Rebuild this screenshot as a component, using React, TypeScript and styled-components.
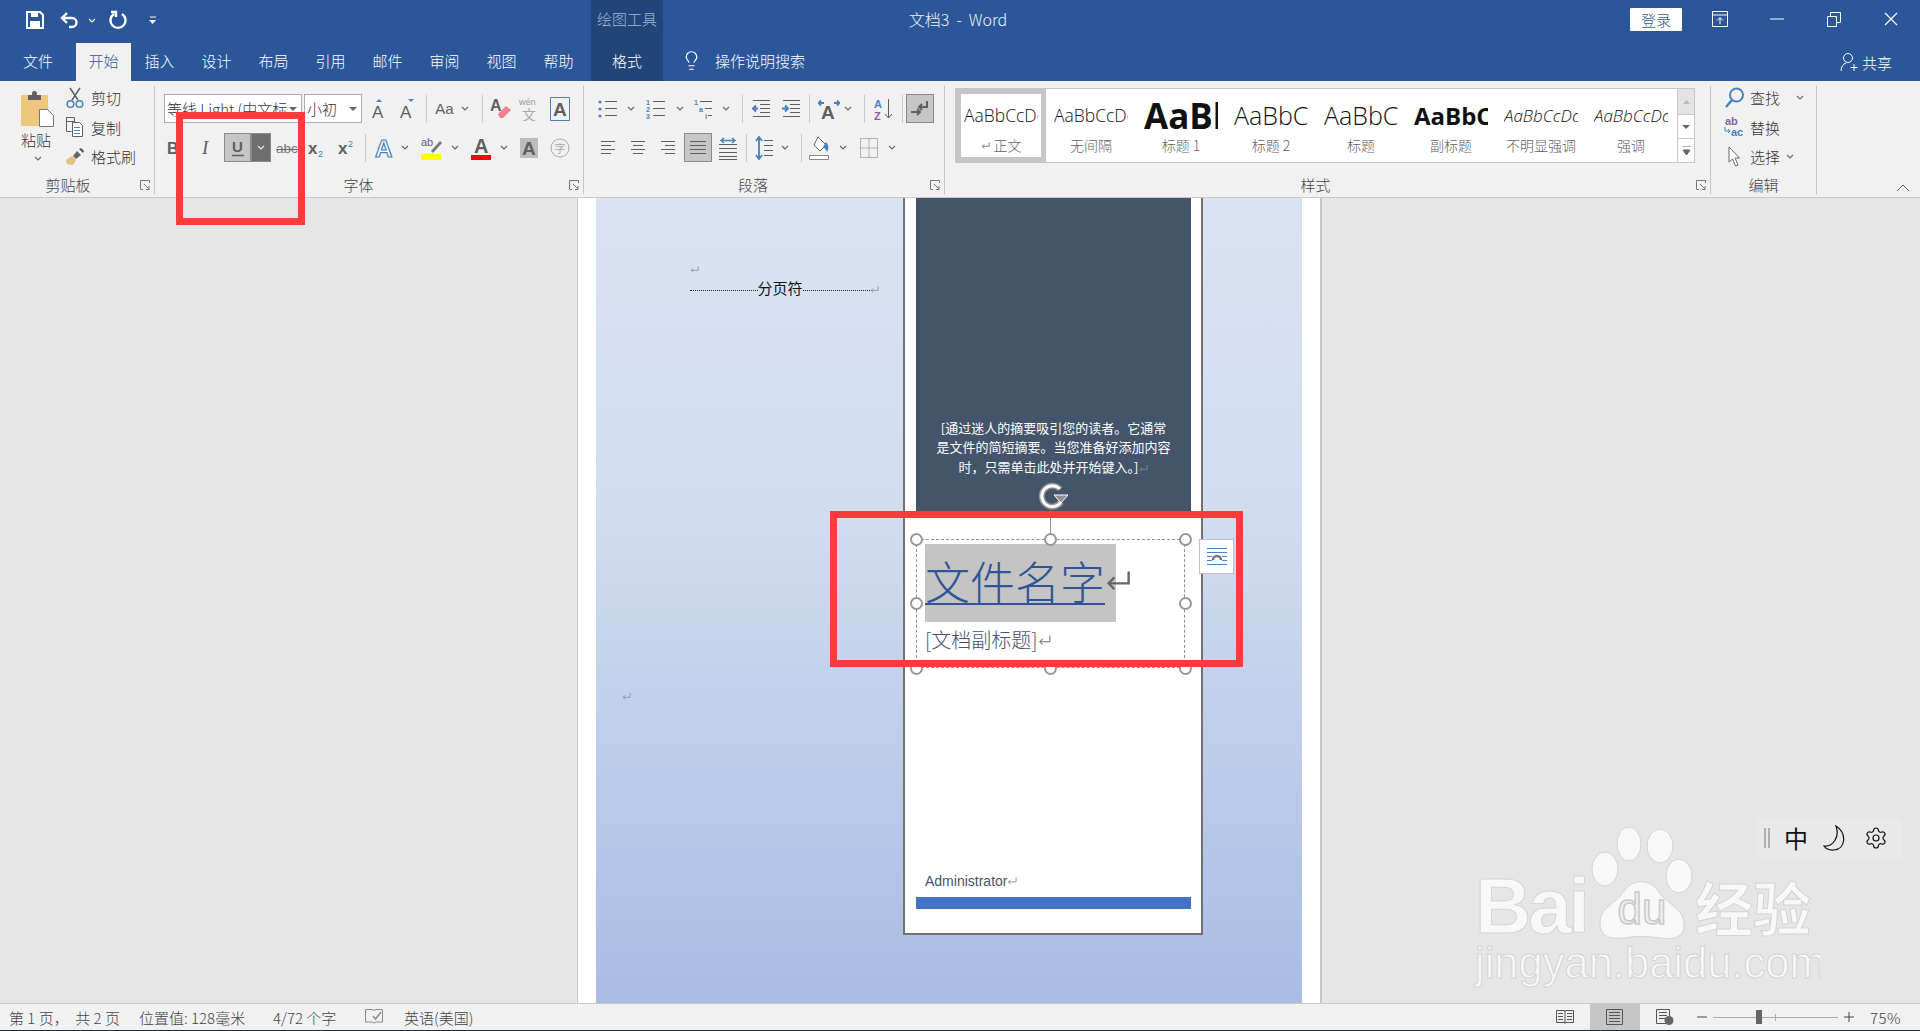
import React, { FC, ReactNode } from 'react'
import styled, { createGlobalStyle } from 'styled-components'
import { Lightbulb, Settings } from 'lucide-react'

const GREY = '#5f5f5f'
const BLUE = '#4a80bd'

const Global = createGlobalStyle`
  html, body { margin: 0; padding: 0; background: #e6e6e6; }
  body { font-family: "Noto Sans CJK SC", "Liberation Sans", sans-serif; font-weight: 300; overflow: hidden; }
  * { box-sizing: border-box; }
`

const Window = styled.div`
  position: relative;
  width: 1920px;
  height: 1031px;
  display: flex;
  flex-direction: column;
  overflow: hidden;
`

/* title bar */
const TopRow = styled.div`
  display: flex;
  height: 43px;
  background: #2b579a;
  color: #fff;
`
const Qat = styled.div`
  display: flex;
  width: 591px;
  padding-left: 21px;
`
const QatItem = styled.div<{ $w: number; $ml?: number }>`
  width: ${(p) => p.$w}px;
  margin-left: ${(p) => p.$ml ?? 0}px;
  height: 40px;
  display: flex;
  align-items: center;
  justify-content: center;
`
const ToolsHeader = styled.div`
  width: 72px;
  background: #224579;
  color: #a3b6d3;
  font-size: 15px;
  line-height: 38px;
  text-align: center;
  white-space: nowrap;
`
const DocTitle = styled.div`
  width: 590px;
  text-align: center;
  font-size: 16px;
  line-height: 38px;
  color: #f2f2f2;
  white-space: pre;
`
const SignIn = styled.div`
  margin: 8px 9px 0 auto;
  width: 52px;
  height: 23px;
  background: #fff;
  border-radius: 1px;
  color: #2b579a;
  font-size: 15px;
  line-height: 23px;
  text-align: center;
`
const WinButton = styled.div<{ $w: number }>`
  width: ${(p) => p.$w}px;
  height: 38px;
  display: flex;
  align-items: center;
  justify-content: center;
`

/* tabs */
const TabRow = styled.div`
  display: flex;
  height: 38px;
  background: #2b579a;
  color: #fff;
  font-size: 15px;
`
const Tab = styled.div<{ $w: number; $active?: boolean; $context?: boolean }>`
  width: ${(p) => p.$w}px;
  padding: 0 0 3px 0;
  display: flex;
  align-items: center;
  justify-content: center;
  background: ${(p) => (p.$active ? '#f1f1f1' : p.$context ? '#224579' : 'transparent')};
  color: ${(p) => (p.$active ? '#2b579a' : '#fff')};
  margin-left: ${(p) => (p.$context ? 4 : 0)}px;
`
const Search = styled.div`
  margin-left: 18px;
  padding-bottom: 3px;
  display: flex;
  align-items: center;
  gap: 13px;
  font-size: 15px;
`
const Share = styled.div`
  margin-left: auto;
  padding: 0 28px 0 0;
  display: flex;
  align-items: center;
  gap: 4px;
  font-size: 15px;
`

/* ribbon */
const Ribbon = styled.div`
  display: flex;
  height: 117px;
  background: #f1f1f1;
  border-bottom: 1px solid #c8c8c8;
  color: #444;
  font-size: 15px;
`
const Group = styled.div<{ $w: number; $pl?: number }>`
  width: ${(p) => p.$w}px;
  margin: 5px 0 3px;
  padding-left: ${(p) => p.$pl ?? 0}px;
  border-right: 1px solid #c6c6c6;
  display: flex;
  flex-direction: column;
`
const GroupFooter = styled.div`
  margin-top: auto;
  height: 18px;
  display: grid;
  grid-template-columns: 1fr auto 1fr;
  align-items: center;
  font-size: 15px;
  line-height: 18px;
  color: #444;
`
const FooterLabel = styled.div<{ $shift?: number }>`
  grid-column: 2;
  margin-right: ${(p) => (p.$shift ?? 0) * 2}px;
`
const Launcher = styled.div`
  grid-column: 3;
  justify-self: end;
  display: flex;
  margin-right: 4px;
`
const FontRows = styled.div`
  padding-top: 8px;
  display: flex;
  flex-direction: column;
  gap: 10px;
`
const ToolRow = styled.div`
  display: flex;
  align-items: center;
  height: 29px;
`
const Tool = styled.div<{ $w: number; $ml?: number; $on?: boolean; $dark?: boolean }>`
  width: ${(p) => p.$w}px;
  height: 29px;
  margin-left: ${(p) => p.$ml ?? 0}px;
  display: flex;
  align-items: center;
  justify-content: center;
  font-family: "Liberation Sans", sans-serif;
  font-weight: 400;
  color: ${GREY};
  background: ${(p) => (p.$dark ? '#6e6e6e' : p.$on ? '#c6c6c6' : 'transparent')};
  border: 1px solid ${(p) => (p.$on || p.$dark ? '#8a8a8a' : 'transparent')};
  flex: none;
`
const Sep = styled.div<{ $l: number; $r: number }>`
  width: 1px;
  height: 28px;
  margin: 0 ${(p) => p.$r}px 0 ${(p) => p.$l}px;
  background: #c9c9c9;
  flex: none;
`
const Combo = styled.div<{ $w: number; $ml?: number }>`
  width: ${(p) => p.$w}px;
  height: 29px;
  margin-left: ${(p) => p.$ml ?? 0}px;
  background: #fff;
  border: 1px solid #ababab;
  display: flex;
  align-items: center;
  padding: 0 4px 0 2px;
  gap: 2px;
  color: #333;
  flex: none;
`
const ComboText = styled.span`
  flex: 1;
  min-width: 0;
  font-size: 15px;
  white-space: nowrap;
  overflow: hidden;
`
const ClipBody = styled.div`
  display: flex;
  padding-left: 13px;
`
const PasteCol = styled.div`
  width: 50px;
  padding-top: 4px;
  display: flex;
  flex-direction: column;
  align-items: center;
  color: #333;
`
const PasteLabel = styled.span`
  margin: 2px 4px 6px 0;
  line-height: 20px;
`
const SmallList = styled.div`
  display: flex;
  flex-direction: column;
  margin: -3px 0 0 2px;
`
const SmallItem = styled.div`
  height: 29.5px;
  display: flex;
  align-items: center;
  gap: 6px;
  color: #333;
  white-space: nowrap;
`
const IconCell = styled.span<{ $w?: number }>`
  width: ${(p) => p.$w ?? 20}px;
  display: flex;
  justify-content: center;
`
const GalleryWrap = styled.div`
  padding: 2px 0 0 10px;
`
const Gallery = styled.div`
  width: 740px;
  height: 75px;
  background: #fff;
  border: 1px solid #c6c6c6;
  display: flex;
`
const StyleItem = styled.div<{ $on?: boolean }>`
  width: 90px;
  height: 73px;
  flex: none;
  overflow: hidden;
  display: flex;
  flex-direction: column;
  align-items: center;
  padding-top: ${(p) => (p.$on ? 1 : 6)}px;
  border-style: solid;
  border-color: ${(p) => (p.$on ? '#c6c6c6' : 'transparent')};
  border-width: ${(p) => (p.$on ? '5px' : '0 5px')};
`
const Preview = styled.div<{ $size: number; $bold?: boolean; $italic?: boolean }>`
  width: 74px;
  height: 40px;
  flex: none;
  overflow: hidden;
  white-space: nowrap;
  display: flex;
  align-items: center;
  font-family: "Open Sans", "Liberation Sans", sans-serif;
  font-size: ${(p) => p.$size}px;
  font-weight: ${(p) => (p.$bold ? 700 : 300)};
  font-style: ${(p) => (p.$italic ? 'italic' : 'normal')};
  color: #111;
`
const StyleName = styled.div`
  font-size: 14px;
  line-height: 20px;
  color: #5f5f5f;
  white-space: nowrap;
  display: flex;
  align-items: center;
  gap: 4px;
`
const Scroller = styled.div`
  margin-left: auto;
  width: 17px;
  display: flex;
  flex-direction: column;
`
const ScrollBtn = styled.div<{ $h: number; $off?: boolean }>`
  height: ${(p) => p.$h}px;
  background: ${(p) => (p.$off ? '#e3e3e3' : '#fff')};
  border-left: 1px solid #c6c6c6;
  border-bottom: 1px solid #c6c6c6;
  display: flex;
  align-items: center;
  justify-content: center;
  &:last-child { border-bottom: 0; }
`
const EditList = styled.div`
  margin-top: -3px;
  padding-left: 13px;
  display: flex;
  flex-direction: column;
`
const EditChevron = styled.span<{ $ml: number }>`
  display: flex;
  margin-left: ${(p) => p.$ml}px;
`
const RibbonEnd = styled.div`
  flex: 1;
  display: flex;
  align-items: flex-end;
  justify-content: flex-end;
  padding: 0 10px 5px 0;
`

/* document */
const DocArea = styled.div`
  position: relative;
  height: 805px;
  background: #e6e6e6;
  padding-left: 577px;
`
const Page = styled.div`
  width: 745px;
  height: 100%;
  background: #fff;
  padding: 0 18px;
  border-left: 1px solid #c6c6c6;
  border-right: 2px solid #c6c6c6;
`
const Sheet = styled.div`
  position: relative;
  height: 100%;
  overflow: hidden;
  background: linear-gradient(180deg, #dae3f3 0%, #d0dcf0 40%, #a8bce3 100%);
`
const Mark = styled.span<{ $x: number; $y: number }>`
  position: absolute;
  left: ${(p) => p.$x}px;
  top: ${(p) => p.$y}px;
  display: flex;
`
const PageBreak = styled.div`
  position: absolute;
  left: 94px;
  top: 79px;
  width: 180px;
  height: 20px;
  display: flex;
  align-items: center;
  font-size: 15px;
  font-weight: 400;
  color: #111;
`
const DotRule = styled.span`
  flex: 1;
  margin-top: 6px;
  border-top: 1px dotted #222;
`
const Card = styled.div`
  position: absolute;
  left: 307px;
  top: -2px;
  width: 300px;
  height: 739px;
  background: #fff;
  border: 2px solid #767171;
  padding: 0 10px 24px 11px;
  display: flex;
  flex-direction: column;
`
const Abstract = styled.div`
  height: 318px;
  flex: none;
  background: #44546a;
  color: #fff;
  font-size: 13px;
  font-weight: 400;
  line-height: 19.5px;
  text-align: center;
  display: flex;
  flex-direction: column;
  justify-content: flex-end;
  padding-bottom: 39px;
`
const AbstractEnd = styled.span`
  display: inline-block;
  margin-left: 1px;
  vertical-align: -1px;
`
const Author = styled.div`
  margin-top: auto;
  padding: 0 0 6px 9px;
  font-family: "Liberation Sans", sans-serif;
  font-weight: 400;
  font-size: 14px;
  line-height: 20px;
  color: #44546a;
  display: flex;
  align-items: center;
`
const BlueBar = styled.div`
  height: 12px;
  background: #4472c4;
  flex: none;
`
const TextBox = styled.div`
  position: absolute;
  left: 320px;
  top: 341px;
  width: 269px;
  height: 129px;
  border: 1px dashed #8f8f8f;
  padding: 4px 0 0 8px;
`
const Selection = styled.div`
  width: 191px;
  height: 78px;
  padding-top: 14px;
  background: #c4c4c4;
  display: flex;
  align-items: flex-start;
  color: #2f5597;
  font-size: 45px;
  line-height: 45px;
`
const Underlined = styled.span`
  display: block;
  flex: none;
  width: 180px;
  white-space: nowrap;
  border-bottom: 2px solid #2f5597;
`
const TitleReturn = styled.span`
  display: flex;
  flex: none;
  margin-top: 10px;
`
const Subtitle = styled.div`
  margin-top: 4px;
  display: flex;
  align-items: center;
  font-size: 20px;
  line-height: 28px;
  color: #44546a;
`
const Handle = styled.span<{ $x: number; $y: number }>`
  position: absolute;
  left: ${(p) => p.$x}px;
  top: ${(p) => p.$y}px;
  width: 13px;
  height: 13px;
  margin: -7px 0 0 -7px;
  border: 2px solid #979797;
  border-radius: 50%;
  background: #fff;
`
const Stem = styled.span`
  position: absolute;
  left: 454px;
  top: 312px;
  width: 1px;
  height: 29px;
  background: #8f8f8f;
`
const LayoutBtn = styled.div`
  position: absolute;
  left: 603px;
  top: 341px;
  width: 35px;
  height: 35px;
  background: #fff;
  border: 1px solid #c0c0c0;
  display: flex;
  align-items: center;
  justify-content: center;
`
const Ime = styled.div`
  position: absolute;
  left: 1757px;
  top: 620px;
  width: 145px;
  height: 40px;
  background: #e9e9e9;
  display: flex;
  align-items: center;
  color: #111;
`
const ImeGrip = styled.span`
  margin-left: 7px;
  width: 6px;
  height: 20px;
  border-left: 2px solid #b0b0b0;
  border-right: 2px solid #b0b0b0;
`
const ImeChar = styled.span`
  margin-left: 14px;
  font-size: 24px;
  font-weight: 400;
  line-height: 30px;
`
const ImeIcon = styled.span<{ $ml: number }>`
  display: flex;
  margin-left: ${(p) => p.$ml}px;
`
const Watermark = styled.svg`
  position: absolute;
  left: 1473px;
  top: 627px;
  pointer-events: none;
`
const WmText = styled.text<{ $size: number; $bold?: boolean }>`
  font-family: "Liberation Sans", "Noto Sans CJK SC", sans-serif;
  font-size: ${(p) => p.$size}px;
  font-weight: ${(p) => (p.$bold ? 700 : 400)};
  fill: #f8f8f8;
  stroke: #d4d4d4;
  stroke-width: 1;
`
const WmInner = styled.text`
  font-family: "Liberation Sans", sans-serif;
  font-size: 44px;
  fill: #f0f0f0;
  stroke: #c9c9c9;
  stroke-width: 1.5;
`

/* status bar */
const Status = styled.div`
  height: 28px;
  background: #f1f1f1;
  border-top: 1px solid #c8c8c8;
  border-bottom: 1px solid #1c2b3a;
  display: flex;
  align-items: center;
  padding-left: 9px;
  font-size: 15px;
  color: #444;
`
const StatusText = styled.div<{ $w?: number }>`
  width: ${(p) => (p.$w ? `${p.$w}px` : 'auto')};
  white-space: pre;
  display: flex;
  align-items: center;
`
const StatusRight = styled.div`
  margin-left: auto;
  height: 100%;
  display: flex;
  align-items: center;
`
const ViewBtn = styled.div<{ $on?: boolean; $w: number }>`
  width: ${(p) => p.$w}px;
  height: 100%;
  background: ${(p) => (p.$on ? '#c6c6c6' : 'transparent')};
  display: flex;
  align-items: center;
  justify-content: center;
`
const ZoomTrack = styled.div`
  position: relative;
  width: 125px;
  height: 1px;
  background: #ababab;
`
const ZoomThumb = styled.span`
  position: absolute;
  left: 43px;
  top: -7px;
  width: 6px;
  height: 14px;
  background: #666;
`
const ZoomTick = styled.span`
  position: absolute;
  left: 62px;
  top: -3px;
  width: 1px;
  height: 7px;
  background: #ababab;
`
const ZoomValue = styled.div`
  width: 60px;
  padding-left: 10px;
  letter-spacing: 0.5px;
`

/* annotation frames */
const RedFrame = styled.div<{ $x: number; $y: number; $w: number; $h: number }>`
  position: absolute;
  left: ${(p) => p.$x}px;
  top: ${(p) => p.$y}px;
  width: ${(p) => p.$w}px;
  height: ${(p) => p.$h}px;
  border: 7px solid #ff3a3a;
  pointer-events: none;
`

/* drawings */
const SvgA = styled.text<{ $size?: number }>`
  font-family: "Liberation Sans", sans-serif;
  font-weight: 700;
  font-size: ${(p) => p.$size ?? 20}px;
`
const IcoSvg = styled.svg`
  flex: none;
`
const Ico: FC<{ w?: number; h?: number; children: ReactNode }> = ({ w = 22, h = 22, children }) => (
  <IcoSvg width={w} height={h} viewBox={`0 0 ${w} ${h}`} fill='none'>
    {children}
  </IcoSvg>
)
const Chev: FC<{ c?: string }> = ({ c = '#666' }) => (
  <Ico w={8} h={5}>
    <path d='M1 1l3 3 3-3' stroke={c} strokeWidth='1.1' />
  </Ico>
)
const Caret = () => (
  <Ico w={8} h={4}>
    <path d='M0 0h8L4 4z' fill='#666' />
  </Ico>
)
const LaunchIcon = () => (
  <Ico w={10} h={10}>
    <path d='M.5 9V.5H9.5V3M.5 9.500H3M4 4l5 5M9 6v3.500H6' stroke='#777' />
  </Ico>
)
const Ret: FC<{ s?: number; c?: string }> = ({ s = 11, c = '#8a8a8a' }) => (
  <IcoSvg width={s} height={s} viewBox='0 0 11 11' fill='none'>
    <path d='M10 1.500V6.500H1.500M4 4L1.500 6.500 4 9' stroke={c} />
  </IcoSvg>
)
const lines = (rows: [number, number, number][], c = GREY) => (
  <path d={rows.map(([a, b, y]) => `M${a} ${y + 0.5}H${b}`).join('')} stroke={c} />
)
const dots = (xs: [number, number][]) =>
  xs.map(([x, y]) => <circle key={y} cx={x} cy={y} r='1.600' fill={BLUE} />)

const SaveIcon = () => (
  <Ico w={18} h={18}>
    <path d='M1 1h13l3 3v13H1z' stroke='#fff' strokeWidth='2' />
    <path d='M5 1h7v5H5zM4 10h10v7H4z' fill='#fff' />
  </Ico>
)
const UndoIcon = () => (
  <Ico w={20} h={18}>
    <path d='M7 2L2 7l5 5M2 7h10a4.500 4.500 0 0 1 0 9H9' stroke='#fff' strokeWidth='2.400' />
  </Ico>
)
const RedoIcon = () => (
  <Ico w={18} h={20}>
    <path d='M5 4a7.500 7.500 0 1 0 8 0M2 2h5v5' stroke='#fff' strokeWidth='2.400' />
  </Ico>
)
const QatMore = () => (
  <Ico w={8} h={8}>
    <path d='M1 1h6' stroke='#fff' />
    <path d='M0 4h7L3.500 8z' fill='#fff' />
  </Ico>
)
const RibbonDisplay = () => (
  <Ico w={16} h={16}>
    <path d='M.5 .5h15v15H.5zM1 4h14' stroke='#fff' />
    <path d='M8 13V7M5 9.500L8 6.500l3 3' stroke='#fff' />
  </Ico>
)
const MinIcon = () => (
  <Ico w={14} h={2}>
    <path d='M0 1h14' stroke='#fff' />
  </Ico>
)
const RestoreIcon = () => (
  <Ico w={14} h={15}>
    <path d='M.5 4.500h9v10h-9zM3.500 4V.5h10v10H10' stroke='#fff' />
  </Ico>
)
const CloseIcon = () => (
  <Ico w={14} h={14}>
    <path d='M1 1l12 12M13 1L1 13' stroke='#fff' strokeWidth='1.200' />
  </Ico>
)
const ShareIcon = () => (
  <Ico w={18} h={20}>
    <circle cx='8' cy='6' r='4.500' stroke='#fff' />
    <path d='M1 19c0-4 2-7 5-8M14 12v7M10.500 15.500h7' stroke='#fff' />
  </Ico>
)
const PasteIcon = () => (
  <Ico w={36} h={38}>
    <rect x='1' y='5' width='27' height='31' rx='1' fill='#eec77e' />
    <path d='M8 5h13v5H8z' fill='#5f5f5f' />
    <circle cx='14.500' cy='3.500' r='2.500' fill='#5f5f5f' />
    <path d='M19.500 19.500h8l6 6v11h-14z' fill='#fff' stroke='#777' />
  </Ico>
)
const ScissorsIcon = () => (
  <Ico w={18} h={22}>
    <path d='M6 13L14 1M12 13L4 1' stroke={GREY} strokeWidth='1.500' />
    <circle cx='4.500' cy='17' r='3.300' stroke={BLUE} strokeWidth='1.500' />
    <circle cx='13.500' cy='17' r='3.300' stroke={BLUE} strokeWidth='1.500' />
  </Ico>
)
const CopyIcon = () => (
  <Ico w={18} h={20}>
    <path d='M.5 .5h8v4h-8z M.5 .5v14h5' stroke={GREY} />
    <path d='M6.500 5.500h7l3 3v11h-10z' fill='#fff' stroke={GREY} />
    <path d='M8 10.500h6M8 13.500h6M8 16.500h6' stroke={BLUE} />
  </Ico>
)
const BrushIcon = () => (
  <Ico w={20} h={20}>
    <path d='M12 4l4 4-5 4-3-3z' fill='#666' />
    <path d='M14 2l2-1 3 3-1 2z' fill='#555' />
    <path d='M7 9l4 4-3 5-6-1-1-4z' fill='#e5c07f' />
  </Ico>
)
const GrowIcon: FC<{ up?: boolean }> = ({ up }) => (
  <Ico w={20} h={22}>
    <text x='3' y='20' fontSize='17' fontWeight='400' fontFamily='Liberation Sans' fill={GREY}>A</text>
    <path d={up ? 'M13 4h-6l3-3z' : 'M17 1h-6l3 3z'} fill={BLUE} />
  </Ico>
)
const EraserIcon = () => (
  <Ico w={22} h={24}>
    <SvgA x='0' y='14' $size={16} fill={GREY}>A</SvgA>
    <path d='M8 17l8-8 5 4-8 8h-3z' fill='#ee7f8b' />
  </Ico>
)
const PinyinIcon = () => (
  <Ico w={22} h={24}>
    <text x='1' y='8' fontSize='9' fill='#9a9a9a' fontFamily='Liberation Sans'>wén</text>
    <text x='4' y='23' fontSize='14' fill='#a8a8a8' fontFamily='Noto Sans CJK SC'>文</text>
  </Ico>
)
const BorderA = () => (
  <Ico w={20} h={24}>
    <path d='M.5 .5h19v23H.5z' stroke={BLUE} />
    <SvgA x='3' y='19' $size={19} fill={GREY}>A</SvgA>
  </Ico>
)
const ItalicI = () => (
  <Ico w={14} h={20}>
    <text x='1' y='16' fontSize='19' fontStyle='italic' fill={GREY} fontFamily='Liberation Serif'>I</text>
  </Ico>
)
const Boldish = () => (
  <Ico w={12} h={20}>
    <SvgA x='0' y='16' $size={16} fill={GREY}>B</SvgA>
  </Ico>
)
const UnderU = () => (
  <Ico w={14} h={20}>
    <SvgA x='1' y='14' $size={15} fill={GREY}>U</SvgA>
    <path d='M1 17.500h12' stroke={GREY} strokeWidth='1.500' />
  </Ico>
)
const StrikeAbc = () => (
  <Ico w={22} h={14}>
    <text x='0' y='12' fontSize='13.500' fill='#777' fontFamily='Liberation Sans'>abc</text>
    <path d='M0 8.500h22' stroke='#666' />
  </Ico>
)
const SubSup: FC<{ sup?: boolean }> = ({ sup }) => (
  <Ico w={18} h={20}>
    <SvgA x='0' y='16' $size={17} fill={GREY}>x</SvgA>
    <text x='10' y={sup ? 9 : 19} fontSize='9' fill={BLUE} fontFamily='Liberation Sans'>2</text>
  </Ico>
)
const EffectA = () => (
  <Ico w={20} h={22}>
    <SvgA x='1' y='20' $size={24} fill='#fff' stroke={BLUE} strokeWidth='1.200'>A</SvgA>
  </Ico>
)
const Highlight = () => (
  <Ico w={22} h={24}>
    <text x='0' y='10' fontSize='11' fill={GREY} fontFamily='Liberation Sans'>ab</text>
    <path d='M10 15L19 5l2 2-9 10z' fill='#777' />
    <path d='M0 18h20v6H0z' fill='#ff0' />
  </Ico>
)
const ColorA = () => (
  <Ico w={20} h={24}>
    <SvgA x='3' y='17' $size={20} fill={GREY}>A</SvgA>
    <path d='M0 19h20v5H0z' fill='#f00' />
  </Ico>
)
const ShadeA = () => (
  <Ico w={18} h={20}>
    <path d='M0 0h18v20H0z' fill='#bdbdbd' />
    <SvgA x='2' y='17' $size={19} fill={GREY}>A</SvgA>
  </Ico>
)
const EnclosedChar = () => (
  <Ico w={20} h={20}>
    <circle cx='10' cy='10' r='9' stroke='#aaa' />
    <text x='4.500' y='14.500' fontSize='11' fill='#aaa' fontFamily='Noto Sans CJK SC'>字</text>
  </Ico>
)
const Bullets = () => (
  <Ico>
    {dots([[3, 4], [3, 11], [3, 18]])}
    {lines([[8, 20, 3], [8, 20, 10], [8, 20, 17]])}
  </Ico>
)
const Numbered = () => (
  <Ico>
    {['1', '2', '3'].map((t, i) => (
      <text key={t} x='1' y={7 + i * 7} fontSize='7' fill={BLUE} fontFamily='Liberation Sans' fontWeight='700'>{t}</text>
    ))}
    {lines([[8, 20, 3], [8, 20, 10], [8, 20, 17]])}
  </Ico>
)
const Multilevel = () => (
  <Ico>
    <text x='0' y='7' fontSize='7' fill={BLUE} fontFamily='Liberation Sans' fontWeight='700'>1</text>
    <text x='5' y='14' fontSize='7' fill={BLUE} fontFamily='Liberation Sans' fontWeight='700'>a</text>
    <text x='11' y='21' fontSize='7' fill={BLUE} fontFamily='Liberation Sans' fontWeight='700'>i</text>
    {lines([[6, 18, 3], [11, 18, 10], [14, 18, 17]])}
  </Ico>
)
const Indent: FC<{ more?: boolean }> = ({ more }) => (
  <Ico w={20} h={20}>
    {lines([[2, 19, 1], [9, 19, 5], [9, 19, 9], [9, 19, 13], [2, 19, 17]])}
    <path d={more ? 'M1 9.500h5M4 6.500l3 3-3 3' : 'M7 9.500H2M5 6.500l-3 3 3 3'} stroke={BLUE} strokeWidth='2' />
  </Ico>
)
const AsianIcon = () => (
  <Ico w={22} h={22}>
    <path d='M1 5h5M3 2.500L.5 5 3 7.500M21 5h-5M19 2.500L21.500 5 19 7.500' stroke={BLUE} strokeWidth='1.800' />
    <SvgA x='3' y='21' $size={19} fill={GREY}>A</SvgA>
  </Ico>
)
const SortIcon = () => (
  <Ico w={20} h={24}>
    <SvgA x='0' y='11' $size={11} fill={BLUE}>A</SvgA>
    <SvgA x='0' y='23' $size={11} fill='#8a5ca8'>Z</SvgA>
    <path d='M14.500 2v19M11 17l3.500 4 3.500-4' stroke={GREY} />
  </Ico>
)
const MarksIcon = () => (
  <Ico w={20} h={20}>
    <path d='M17 2v6H9M12 5L9 8l3 3' stroke={GREY} strokeWidth='2' />
    <path d='M1 13h9M7 10l3 3-3 3' stroke={GREY} strokeWidth='2' />
  </Ico>
)
const Align: FC<{ mode: 'l' | 'c' | 'r' }> = ({ mode }) => {
  const r = (w: number): [number, number] =>
    mode === 'l' ? [3, 3 + w] : mode === 'r' ? [17 - w, 17] : [10 - w / 2, 10 + w / 2]
  return (
    <Ico w={20} h={16}>
      {lines([[...r(14), 1], [...r(10), 5], [...r(14), 9], [...r(10), 13]])}
    </Ico>
  )
}
const Justify = () => (
  <Ico w={18} h={18}>
    {lines([[1, 17, 2], [1, 17, 6], [1, 17, 10], [1, 17, 14]])}
  </Ico>
)
const Distributed = () => (
  <Ico w={18} h={24}>
    {lines([[0, 18, 8], [0, 18, 12], [0, 18, 16], [0, 18, 20], [0, 18, 23]])}
    <path d='M2 4.500h14M5 2L2 4.500 5 7M13 2l3 2.500L13 7' stroke={BLUE} strokeWidth='1.500' />
  </Ico>
)
const LineSpacing = () => (
  <Ico w={18} h={24}>
    <path d='M4 1v22M1 5l3-4 3 4M1 19l3 4 3-4' stroke={BLUE} strokeWidth='1.800' />
    {lines([[9, 18, 4], [9, 18, 9], [9, 18, 14], [9, 18, 19]])}
  </Ico>
)
const BucketIcon = () => (
  <Ico w={22} h={24}>
    <path d='M9 1l8 8-6 6-6-6z' fill='#fff' stroke={GREY} />
    <path d='M17 6c3 3 3 7 1 10-1-3-3-4-4-5z' fill={BLUE} />
    <path d='M.5 19.500h19v4H.5z' fill='#fff' stroke='#888' />
  </Ico>
)
const BordersIcon = () => (
  <Ico w={18} h={20}>
    <path d='M.5 .5h17v19H.5zM9 .5v19M.5 10h17' stroke='#777' strokeDasharray='1 1' />
  </Ico>
)
const FindIcon = () => (
  <Ico w={20} h={22}>
    <circle cx='12.500' cy='8' r='6.500' stroke={BLUE} strokeWidth='2' />
    <path d='M8 13l-6 7' stroke={BLUE} strokeWidth='2.500' />
  </Ico>
)
const ReplaceIcon = () => (
  <Ico w={20} h={22}>
    <text x='1' y='9' fontSize='11' fontWeight='700' fill='#8a5ca8' fontFamily='Liberation Sans'>ab</text>
    <text x='7' y='20' fontSize='11' fontWeight='700' fill={BLUE} fontFamily='Liberation Sans'>ac</text>
    <path d='M1 11v4h5M4 13l2 2-2 2' stroke={BLUE} />
  </Ico>
)
const PointerIcon = () => (
  <Ico w={14} h={22}>
    <path d='M2 1v15l3.500-3 3 7 2.500-1-3-7h4.500z' fill='#fff' stroke='#666' />
  </Ico>
)
const CollapseIcon = () => (
  <Ico w={14} h={8}>
    <path d='M1 7l6-6 6 6' stroke='#555' />
  </Ico>
)
const BulbWhite = () => <Lightbulb size={21} color='#fff' strokeWidth={1.4} />
const RotateHandle = () => (
  <Ico w={32} h={32}>
    <path d='M24 9a10.500 10.500 0 1 0 1 13' stroke='#8f8f8f' strokeWidth='6' />
    <path d='M24 9a10.500 10.500 0 1 0 1 13' stroke='#fff' strokeWidth='3' />
    <path d='M18 15h14l-7 8z' fill='#8f8f8f' stroke='#fff' />
  </Ico>
)
const LayoutOptions = () => (
  <Ico w={22} h={20}>
    {lines([[1, 21, 1], [1, 21, 5], [1, 6, 9], [16, 21, 9], [1, 6, 13], [16, 21, 13], [1, 21, 17]], '#4a80bd')}
    <path d='M7 13a4 4 0 0 1 8 0' stroke='#777' strokeWidth='2.500' />
  </Ico>
)
const MoonIcon = () => (
  <Ico w={24} h={26}>
    <path d='M13 1C24 8 23 24 11 25 6 25.500 3 24 1 21 10 22 17 12 13 1z' stroke='#111' strokeWidth='1.200' />
  </Ico>
)
const ProofIcon = () => (
  <Ico w={18} h={18}>
    <path d='M.5 1.500H7l2 1 2-1h6.500V14H11l-2 1-2-1H.5z' stroke='#8a8a8a' />
    <path d='M8 8l2.500 3L16 4' stroke='#8a8a8a' strokeWidth='1.500' />
  </Ico>
)
const ReadIcon = () => (
  <Ico w={18} h={16}>
    <path d='M.5 1.500h8l.5 1 .5-1h8v12h-8l-.5 1-.5-1h-8zM9 2v12' stroke='#555' />
    {lines([[2, 7, 4], [2, 7, 7], [2, 7, 10], [11, 16, 4], [11, 16, 7], [11, 16, 10]], '#555')}
  </Ico>
)
const PrintIcon = () => (
  <Ico w={18} h={16}>
    <path d='M.5 .5h16v15H.5z' stroke='#555' />
    {lines([[3, 14, 3], [3, 14, 6], [3, 14, 9], [3, 14, 12]], '#555')}
  </Ico>
)
const WebIcon = () => (
  <Ico w={18} h={16}>
    <path d='M11 14.500H.5V.5h13V8' stroke='#555' />
    {lines([[3, 11, 3], [3, 11, 6], [3, 9, 9]], '#555')}
    <circle cx='13' cy='11.500' r='4.500' fill='#666' />
  </Ico>
)
const Minus = () => (
  <Ico w={10} h={2}>
    <path d='M0 1h10' stroke='#444' />
  </Ico>
)
const Plus = () => (
  <Ico w={10} h={10}>
    <path d='M0 5h10M5 0v10' stroke='#444' />
  </Ico>
)

const tabs: [string, number][] = [
  ['文件', 76],
  ['开始', 55],
  ['插入', 57],
  ['设计', 57],
  ['布局', 57],
  ['引用', 57],
  ['邮件', 57],
  ['审阅', 57],
  ['视图', 57],
  ['帮助', 57]
]

const styleItems = [
  { text: 'AaBbCcDc', name: '正文', size: 17.5, on: true },
  { text: 'AaBbCcDc', name: '无间隔', size: 17.5 },
  { text: 'AaBl', name: '标题 1', size: 35, bold: true },
  { text: 'AaBbCc', name: '标题 2', size: 25 },
  { text: 'AaBbCc', name: '标题', size: 25 },
  { text: 'AaBbCc', name: '副标题', size: 24, bold: true },
  { text: 'AaBbCcDc', name: '不明显强调', size: 17, italic: true },
  { text: 'AaBbCcDc', name: '强调', size: 17, italic: true }
]

const handles: [number, number][] = [
  [0, 0],
  [134, 0],
  [269, 0],
  [0, 64],
  [269, 64],
  [0, 129],
  [134, 129],
  [269, 129]
]

const ChevTool: FC<{ w: number; ml?: number }> = ({ w, ml }) => (
  <Tool $w={w} $ml={ml}>
    <Chev />
  </Tool>
)

const App: FC = () => (
  <Window>
    <Global />
    <TopRow>
      <Qat>
        <QatItem $w={28}><SaveIcon /></QatItem>
        <QatItem $w={28} $ml={7}><UndoIcon /></QatItem>
        <QatItem $w={16}><Chev c='#fff' /></QatItem>
        <QatItem $w={28} $ml={4}><RedoIcon /></QatItem>
        <QatItem $w={28} $ml={7}><QatMore /></QatItem>
      </Qat>
      <ToolsHeader>绘图工具</ToolsHeader>
      <DocTitle>{'文档3  -  Word'}</DocTitle>
      <SignIn>登录</SignIn>
      <WinButton $w={57}><RibbonDisplay /></WinButton>
      <WinButton $w={58}><MinIcon /></WinButton>
      <WinButton $w={56}><RestoreIcon /></WinButton>
      <WinButton $w={58}><CloseIcon /></WinButton>
    </TopRow>

    <TabRow>
      {tabs.map(([label, w]) => (
        <Tab key={label} $w={w} $active={label === '开始'}>{label}</Tab>
      ))}
      <Tab $w={72} $context>格式</Tab>
      <Search>
        <BulbWhite />
        操作说明搜索
      </Search>
      <Share>
        <ShareIcon />
        共享
      </Share>
    </TabRow>

    <Ribbon>
      <Group $w={155}>
        <ClipBody>
          <PasteCol>
            <PasteIcon />
            <PasteLabel>粘贴</PasteLabel>
            <Chev />
          </PasteCol>
          <SmallList>
            <SmallItem><IconCell><ScissorsIcon /></IconCell>剪切</SmallItem>
            <SmallItem><IconCell><CopyIcon /></IconCell>复制</SmallItem>
            <SmallItem><IconCell><BrushIcon /></IconCell>格式刷</SmallItem>
          </SmallList>
        </ClipBody>
        <GroupFooter>
          <FooterLabel $shift={9}>剪贴板</FooterLabel>
          <Launcher><LaunchIcon /></Launcher>
        </GroupFooter>
      </Group>

      <Group $w={429} $pl={9}>
        <FontRows>
          <ToolRow>
            <Combo $w={138}><ComboText>等线 Light (中文标</ComboText><Caret /></Combo>
            <Combo $w={58} $ml={2}><ComboText>小初</ComboText><Caret /></Combo>
            <Tool $w={28} $ml={3}><GrowIcon up /></Tool>
            <Tool $w={28}><GrowIcon /></Tool>
            <Sep $l={5} $r={4} />
            <Tool $w={27}>Aa</Tool>
            <ChevTool w={14} />
            <Sep $l={10} $r={4} />
            <Tool $w={28}><EraserIcon /></Tool>
            <Tool $w={28}><PinyinIcon /></Tool>
            <Tool $w={28} $ml={3}><BorderA /></Tool>
          </ToolRow>
          <ToolRow>
            <Tool $w={18}><Boldish /></Tool>
            <Tool $w={28} $ml={12}><ItalicI /></Tool>
            <Tool $w={27} $ml={2} $on><UnderU /></Tool>
            <Tool $w={20} $dark><Chev c='#eee' /></Tool>
            <Tool $w={28} $ml={2}><StrikeAbc /></Tool>
            <Tool $w={28} $ml={2}><SubSup /></Tool>
            <Tool $w={28} $ml={2}><SubSup sup /></Tool>
            <Sep $l={4} $r={4} />
            <Tool $w={28}><EffectA /></Tool>
            <ChevTool w={14} />
            <Tool $w={28} $ml={6}><Highlight /></Tool>
            <ChevTool w={14} ml={2} />
            <Tool $w={28} $ml={5}><ColorA /></Tool>
            <ChevTool w={14} ml={2} />
            <Tool $w={28} $ml={4}><ShadeA /></Tool>
            <Tool $w={28} $ml={3}><EnclosedChar /></Tool>
          </ToolRow>
        </FontRows>
        <GroupFooter>
          <FooterLabel $shift={15}>字体</FooterLabel>
          <Launcher><LaunchIcon /></Launcher>
        </GroupFooter>
      </Group>

      <Group $w={361} $pl={10}>
        <FontRows>
          <ToolRow>
            <Tool $w={28}><Bullets /></Tool>
            <ChevTool w={18} />
            <Tool $w={28} $ml={2}><Numbered /></Tool>
            <ChevTool w={20} />
            <Tool $w={24} $ml={3}><Multilevel /></Tool>
            <ChevTool w={18} />
            <Sep $l={7} $r={7} />
            <Tool $w={22}><Indent /></Tool>
            <Tool $w={22} $ml={8}><Indent more /></Tool>
            <Sep $l={7} $r={6} />
            <Tool $w={26}><AsianIcon /></Tool>
            <ChevTool w={12} />
            <Sep $l={10} $r={9} />
            <Tool $w={20}><SortIcon /></Tool>
            <Sep $l={8} $r={3} />
            <Tool $w={28} $on><MarksIcon /></Tool>
          </ToolRow>
          <ToolRow>
            <Tool $w={28}><Align mode='l' /></Tool>
            <Tool $w={28} $ml={2}><Align mode='c' /></Tool>
            <Tool $w={28} $ml={2}><Align mode='r' /></Tool>
            <Tool $w={28} $ml={2} $on><Justify /></Tool>
            <Tool $w={28} $ml={2}><Distributed /></Tool>
            <Sep $l={4} $r={3} />
            <Tool $w={28}><LineSpacing /></Tool>
            <ChevTool w={14} />
            <Sep $l={9} $r={5} />
            <Tool $w={26}><BucketIcon /></Tool>
            <ChevTool w={14} ml={3} />
            <Tool $w={28} $ml={5}><BordersIcon /></Tool>
            <ChevTool w={14} ml={2} />
          </ToolRow>
        </FontRows>
        <GroupFooter>
          <FooterLabel $shift={16}>段落</FooterLabel>
          <Launcher><LaunchIcon /></Launcher>
        </GroupFooter>
      </Group>

      <Group $w={766}>
        <GalleryWrap>
          <Gallery>
            {styleItems.map((s) => (
              <StyleItem key={s.name} $on={s.on}>
                <Preview $size={s.size} $bold={s.bold} $italic={s.italic}>{s.text}</Preview>
                <StyleName>{s.on && <Ret s={9} c='#666' />}{s.name}</StyleName>
              </StyleItem>
            ))}
            <Scroller>
              <ScrollBtn $h={26} $off><Ico w={7} h={4}><path d='M0 4h7L3.500 0z' fill='#bbb' /></Ico></ScrollBtn>
              <ScrollBtn $h={24}><Caret /></ScrollBtn>
              <ScrollBtn $h={23}><Ico w={9} h={9}><path d='M0 0h9M1 4h7L4.500 9z' stroke='#666' fill='#666' /></Ico></ScrollBtn>
            </Scroller>
          </Gallery>
        </GalleryWrap>
        <GroupFooter>
          <FooterLabel $shift={12}>样式</FooterLabel>
          <Launcher><LaunchIcon /></Launcher>
        </GroupFooter>
      </Group>

      <Group $w={106}>
        <EditList>
          <SmallItem><IconCell $w={20}><FindIcon /></IconCell>查找<EditChevron $ml={10}><Chev /></EditChevron></SmallItem>
          <SmallItem><IconCell $w={20}><ReplaceIcon /></IconCell>替换</SmallItem>
          <SmallItem><IconCell $w={20}><PointerIcon /></IconCell>选择<EditChevron $ml={0}><Chev /></EditChevron></SmallItem>
        </EditList>
        <GroupFooter>
          <FooterLabel>编辑</FooterLabel>
        </GroupFooter>
      </Group>
      <RibbonEnd><CollapseIcon /></RibbonEnd>
    </Ribbon>

    <DocArea>
      <Page>
        <Sheet>
          <Mark $x={94} $y={67}><Ret s={9} /></Mark>
          <PageBreak>
            <DotRule />分页符<DotRule />
          </PageBreak>
          <Mark $x={274} $y={87}><Ret s={9} /></Mark>
          <Mark $x={26} $y={494}><Ret s={9} /></Mark>
          <Card>
            <Abstract>
              <div>[通过迷人的摘要吸引您的读者。它通常</div>
              <div>是文件的简短摘要。当您准备好添加内容</div>
              <div>时，只需单击此处并开始键入。]<AbstractEnd><Ret s={9} c='#7f8c9f' /></AbstractEnd></div>
            </Abstract>
            <Author>Administrator<Ret s={10} /></Author>
            <BlueBar />
          </Card>
          <Stem />
          <Mark $x={440} $y={282}><RotateHandle /></Mark>
          <TextBox>
            <Selection>
              <Underlined>文件名字</Underlined>
              <TitleReturn><Ret s={26} c='#666' /></TitleReturn>
            </Selection>
            <Subtitle>[文档副标题]<Ret s={13} /></Subtitle>
            {handles.map(([x, y]) => (
              <Handle key={`${x}-${y}`} $x={x} $y={y} />
            ))}
          </TextBox>
          <LayoutBtn><LayoutOptions /></LayoutBtn>
        </Sheet>
      </Page>
      <Watermark width={347} height={170} viewBox='0 0 347 170'>
        <WmText x='2' y='108' $size={78} $bold textLength='115'>Bai</WmText>
        <g fill='#f8f8f8' stroke='#d4d4d4'>
          <ellipse cx='132' cy='44' rx='13' ry='17' />
          <ellipse cx='156' cy='19' rx='12' ry='17' />
          <ellipse cx='187' cy='21' rx='13' ry='17' />
          <ellipse cx='206' cy='51' rx='13' ry='17' />
          <path d='M127 98c0-16 14-17 24-32 8-12 26-13 34 0 10 15 26 16 26 34 0 15-14 14-24 13-14-2-24-2-36 0-12 1-24 0-24-15z' />
        </g>
        <WmInner x='169' y='99' textAnchor='middle'>du</WmInner>
        <WmText x='222' y='106' $size={58} $bold>经验</WmText>
        <WmText x='2' y='153' $size={43.5}>jingyan.baidu.com</WmText>
      </Watermark>
      <Ime>
        <ImeGrip />
        <ImeChar>中</ImeChar>
        <ImeIcon $ml={15}><MoonIcon /></ImeIcon>
        <ImeIcon $ml={17}><Settings size={24} strokeWidth={1.2} color='#111' /></ImeIcon>
      </Ime>
    </DocArea>

    <Status>
      <StatusText $w={130}>第 1 页，  共 2 页</StatusText>
      <StatusText $w={134}>位置值: 128毫米</StatusText>
      <StatusText $w={92}>4/72 个字</StatusText>
      <StatusText $w={39}><ProofIcon /></StatusText>
      <StatusText>英语(美国)</StatusText>
      <StatusRight>
        <ViewBtn $w={50}><ReadIcon /></ViewBtn>
        <ViewBtn $w={50} $on><PrintIcon /></ViewBtn>
        <ViewBtn $w={50}><WebIcon /></ViewBtn>
        <ViewBtn $w={23}><Minus /></ViewBtn>
        <ZoomTrack>
          <ZoomTick />
          <ZoomThumb />
        </ZoomTrack>
        <ViewBtn $w={22}><Plus /></ViewBtn>
        <ZoomValue>75%</ZoomValue>
      </StatusRight>
    </Status>

    <RedFrame $x={176} $y={112} $w={129} $h={113} />
    <RedFrame $x={830} $y={511} $w={413} $h={156} />
  </Window>
)

export default App
